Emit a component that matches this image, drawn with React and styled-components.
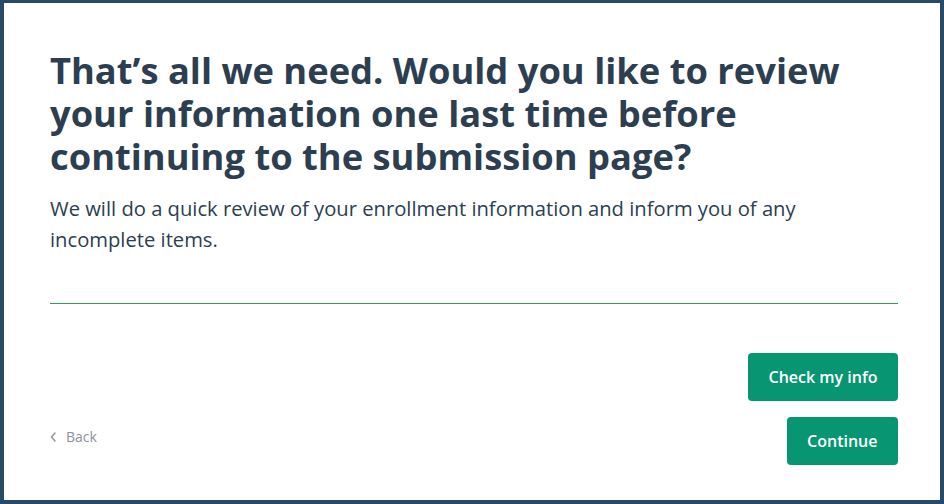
import React from 'react';
import styled, { createGlobalStyle } from 'styled-components';

const GlobalStyle = createGlobalStyle`
  html, body {
    margin: 0;
    padding: 0;
    background: #ffffff;
  }
  body {
    font-family: 'Open Sans', 'Liberation Sans', sans-serif;
  }
`

const Frame = styled.div`
  box-sizing: border-box;
  width: 944px;
  height: 504px;
  border: 4px solid #284a66;
  border-top-width: 3px;
  background: #ffffff;
  padding: 46px 42px 0 46px;
  display: flex;
  flex-direction: column;
`

const Title = styled.h1`
  margin: 0;
  font-size: 36.3px;
  line-height: 43px;
  font-weight: 700;
  color: #2c3e50;
`

const Lead = styled.p`
  margin: 15px 0 0;
  font-size: 20.2px;
  line-height: 31px;
  color: #2c3e50;
`

const Divider = styled.hr`
  margin: 48px 0 0;
  border: none;
  height: 1px;
  background: #2f9a62;
`

const Footer = styled.div`
  display: flex;
  justify-content: space-between;
  align-items: flex-end;
  margin-top: 49px;
`

const BackLink = styled.a`
  display: flex;
  align-items: center;
  gap: 10px;
  margin: 0 0 19px 0;
  font-size: 14px;
  color: #8d909c;
  cursor: pointer;
  text-decoration: none;
`

const Actions = styled.div`
  display: flex;
  flex-direction: column;
  align-items: flex-end;
  gap: 16px;
`

const Button = styled.button`
  height: 48px;
  padding: 0 20.5px;
  border: none;
  border-radius: 4px;
  background: #079671;
  color: #ffffff;
  font-family: 'Open Sans', 'Liberation Sans', sans-serif;
  font-size: 16px;
  font-weight: 600;
  cursor: pointer;
`

function Chevron() {
  return (
    <svg width="6" height="10" viewBox="0 0 6 10" fill="none">
      <path d="M5 1L1.5 5L5 9" stroke="#8d909c" strokeWidth="1.4" strokeLinecap="round" strokeLinejoin="round" />
    </svg>
  )
}

export default function App() {
  return (
    <>
      <GlobalStyle />
      <Frame>
        <Title>
          That’s all we need. Would you like to review your information one last time before continuing to the submission page?
        </Title>
        <Lead>
          We will do a quick review of your enrollment information and inform you of any incomplete items.
        </Lead>
        <Divider />
        <Footer>
          <BackLink>
            <Chevron />
            <span>Back</span>
          </BackLink>
          <Actions>
            <Button>Check my info</Button>
            <Button>Continue</Button>
          </Actions>
        </Footer>
      </Frame>
    </>
  )
}
